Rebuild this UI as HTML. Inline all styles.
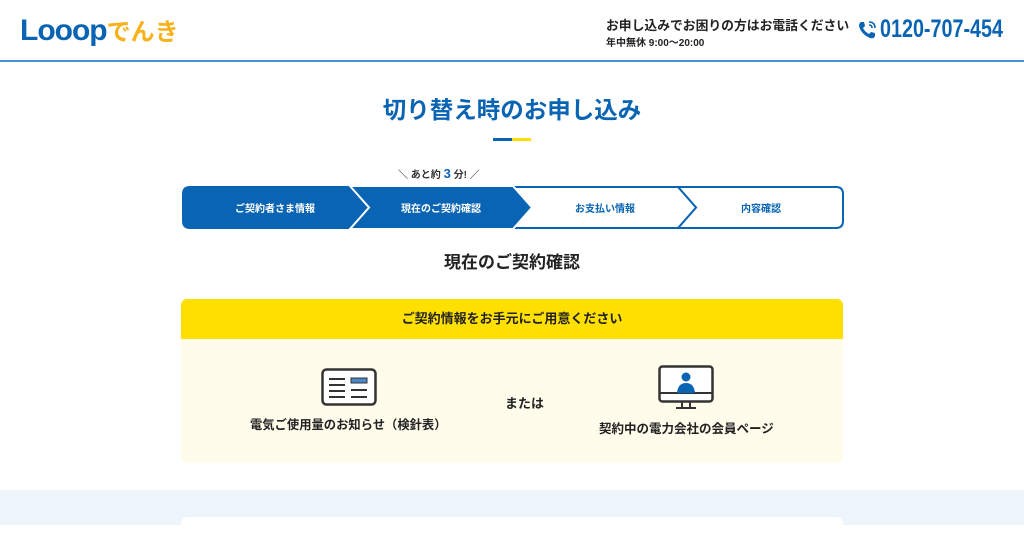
<!DOCTYPE html>
<html><head><meta charset="utf-8"><style>
*{margin:0;padding:0;box-sizing:border-box}
body{width:1024px;height:525px;overflow:hidden;background:#fff;font-family:"Liberation Sans","Noto Sans CJK JP",sans-serif;color:#222;position:relative}
.a{position:absolute;white-space:nowrap}
</style></head><body>
<div class="a" style="left:20px;top:12px;font-size:30px;font-weight:bold;color:#0a64b4;letter-spacing:-1px">Looop<span style="color:#f7b21a;font-size:24px;letter-spacing:0">でんき</span></div>
<div class="a" style="left:606px;top:15px;font-size:12.8px;font-weight:bold;color:#222">お申し込みでお困りの方はお電話ください</div>
<div class="a" style="left:606px;top:34px;font-size:10px;font-weight:bold;color:#222">年中無休 9:00〜20:00</div>
<svg class="a" style="left:857px;top:20px" width="20" height="20" viewBox="0 0 20 20"><path d="M4 2 L7 2 L8 6 L6 8 Q8 12 12 14 L14 12 L18 13 L18 16 Q17 19 13 18 Q4 14 2 6 Q2 3 4 2Z" fill="#0a64b4"/><path d="M12 5 Q15 5 15 8 M12 2 Q18 2 18 8" stroke="#0a64b4" stroke-width="1.6" fill="none"/></svg>
<div class="a" style="left:880px;top:15px;font-size:25px;font-weight:bold;color:#0a64b4;transform:scaleX(0.79);transform-origin:left">0120-707-454</div>
<div class="a" style="left:0;top:60px;width:1024px;height:2px;background:#4a90d0"></div>
<div class="a" style="left:0;top:91px;width:1024px;text-align:center;font-size:23.5px;font-weight:bold;color:#0a64b4">切り替え時のお申し込み</div>
<div class="a" style="left:493px;top:138px;width:19px;height:3px;background:#0a64b4"></div>
<div class="a" style="left:512px;top:138px;width:19px;height:3px;background:#ffe000"></div>
<div class="a" style="left:398px;top:166px;font-size:10px;font-weight:bold;color:#333">＼ あと約 <span style="font-size:13px;color:#0a64b4">3</span> 分! ／</div>
<svg class="a" style="left:0;top:0" width="1024" height="300">
<path d="M836,187 H678 L696,207.5 L678,228 H836 Q843,228 843,221 V194 Q843,187 836,187Z" fill="#fff" stroke="#0a64b4" stroke-width="2"/>
<path d="M513,187 H678 L696,207.5 L678,228 H513" fill="#fff" stroke="#0a64b4" stroke-width="2"/>
<path d="M190,186 H350 L369,207.5 L350,229 H190 Q182,229 182,221 V194 Q182,186 190,186Z" fill="#0a64b4"/>
<path d="M350,186 H513 L532,207.5 L513,229 H350 L369,207.5Z" fill="#0a64b4" stroke="#fff" stroke-width="2"/>
<text x="275" y="212" font-size="10" font-weight="bold" fill="#fff" text-anchor="middle" font-family="Liberation Sans,Noto Sans CJK JP,sans-serif">ご契約者さま情報</text>
<text x="441" y="212" font-size="10" font-weight="bold" fill="#fff" text-anchor="middle" font-family="Liberation Sans,Noto Sans CJK JP,sans-serif">現在のご契約確認</text>
<text x="605" y="212" font-size="10" font-weight="bold" fill="#0a64b4" text-anchor="middle" font-family="Liberation Sans,Noto Sans CJK JP,sans-serif">お支払い情報</text>
<text x="761" y="212" font-size="10" font-weight="bold" fill="#0a64b4" text-anchor="middle" font-family="Liberation Sans,Noto Sans CJK JP,sans-serif">内容確認</text>
</svg>
<div class="a" style="left:0;top:248px;width:1024px;text-align:center;font-size:17px;font-weight:bold">現在のご契約確認</div>
<div class="a" style="left:181px;top:299px;width:662px;height:164px;background:#fffcec;border-radius:6px;overflow:hidden">
<div style="height:40px;background:#ffe000;text-align:center;line-height:40px;font-size:13px;font-weight:bold">ご契約情報をお手元にご用意ください</div>
</div>
<svg class="a" style="left:321px;top:368px" width="56" height="38" viewBox="0 0 56 38"><rect x="1.5" y="1.5" width="53" height="35" rx="4" fill="#fff" stroke="#333" stroke-width="2.5"/><rect x="30" y="10" width="16" height="5" fill="#4a86c8" stroke="#333" stroke-width="1"/><path d="M8 11H24M8 17H24M8 23H24M8 29H24M30 22H46M30 29H46" stroke="#333" stroke-width="2"/></svg>
<svg class="a" style="left:658px;top:365px" width="56" height="45" viewBox="0 0 56 45"><rect x="1.5" y="1.5" width="53" height="35" rx="3" fill="#fff" stroke="#333" stroke-width="2.5"/><path d="M2 28H54" stroke="#333" stroke-width="2"/><circle cx="28" cy="12" r="4.5" fill="#0a64b4"/><path d="M19 28 Q20 18 28 18 Q36 18 37 28Z" fill="#0a64b4"/><path d="M24 37V42M32 37V42M18 43H38" stroke="#333" stroke-width="2"/></svg>
<div class="a" style="left:250px;top:415px;font-size:12.3px;font-weight:bold">電気ご使用量のお知らせ（検針表）</div>
<div class="a" style="left:505px;top:393px;font-size:13px;font-weight:bold">または</div>
<div class="a" style="left:599px;top:418px;font-size:12.5px;font-weight:bold">契約中の電力会社の会員ページ</div>
<div class="a" style="left:0;top:490px;width:1024px;height:35px;background:#edf5fb"></div>
<div class="a" style="left:181px;top:517px;width:662px;height:20px;background:#fff;border-radius:6px"></div>
</body></html>
